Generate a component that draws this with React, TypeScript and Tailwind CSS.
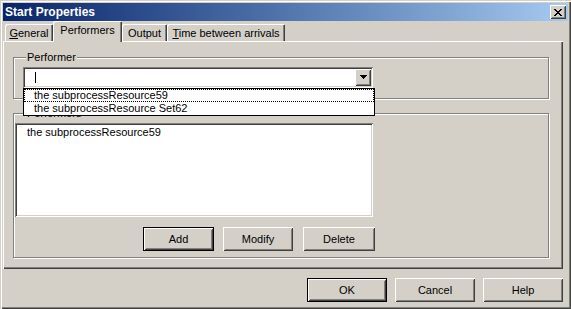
import { ReactNode } from 'react';

const raised =
  'shadow-[inset_1px_1px_0_#fff,inset_-1px_-1px_0_#404040,inset_2px_2px_0_#d4d0c8,inset_-2px_-2px_0_#808080]';
const sunken =
  'shadow-[inset_1px_1px_0_#808080,inset_-1px_-1px_0_#fff,inset_2px_2px_0_#404040,inset_-2px_-2px_0_#d4d0c8]';
const etched = 'border border-[#808080] shadow-[inset_1px_1px_0_#fff,1px_1px_0_#fff]';

function Button({ label, width, isDefault }: { label: string; width: string; isDefault?: boolean }) {
  return (
    <div
      className={`${width} h-[24px] flex items-center justify-center bg-[#d4d0c8] ${raised} ${
        isDefault ? 'border border-black' : ''
      }`}
    >
      {label}
    </div>
  );
}

function Tab({ children, width, active }: { children: ReactNode; width: string; active?: boolean }) {
  return (
    <div
      className={`${width} flex items-center justify-center rounded-tl-[2px] rounded-tr-[1px] bg-[#d4d0c8] shadow-[inset_1px_1px_0_#fff,inset_-1px_0_0_#404040,inset_-2px_0_0_#808080] ${
        active ? 'relative z-10 h-[21px] -mb-px pb-[3px]' : 'h-[17px] pt-px'
      }`}
    >
      {children}
    </div>
  );
}

function GroupLabel({ text }: { text: string }) {
  return (
    <span className="absolute left-[12px] -top-[7px] px-px leading-[13px] bg-[#d4d0c8]">{text}</span>
  );
}

export default function App() {
  return (
    <div className="w-[571px] h-[309px] flex flex-col pl-[3px] pr-[3px] pt-[3px] bg-[#d4d0c8] text-[11px] text-black font-['Liberation_Sans',Arial,sans-serif] shadow-[inset_1px_1px_0_#d4d0c8,inset_2px_2px_0_#fff,inset_-1px_-1px_0_#404040,inset_-2px_-2px_0_#808080] overflow-hidden">
      {/* title bar */}
      <div className="h-[18px] flex items-center justify-between bg-gradient-to-r from-[#0a246a] to-[#a6caf0]">
        <span className="pl-[2px] text-[12px] font-bold text-white leading-none">Start Properties</span>
        <div className={`mr-[2px] w-[16px] h-[14px] flex items-center justify-center bg-[#d4d0c8] ${raised}`}>
          <svg width="8" height="7" viewBox="0 0 8 7" shapeRendering="crispEdges">
            <path d="M0 0h2v1h-2zM6 0h2v1h-2zM1 1h2v1h-2zM5 1h2v1h-2zM2 2h4v1h-4zM3 3h2v1h-2zM2 4h4v1h-4zM1 5h2v1h-2zM5 5h2v1h-2zM0 6h2v1h-2zM6 6h2v1h-2z" fill="#000" />
          </svg>
        </div>
      </div>

      {/* tabs */}
      <div className="h-[20px] flex items-end pl-[2px]">
        <Tab width="w-[48px]">
          <span>
            <span className="underline underline-offset-[1px]">G</span>eneral
          </span>
        </Tab>
        <Tab width="w-[69px]" active>
          Performers
        </Tab>
        <Tab width="w-[45px]">Output</Tab>
        <Tab width="w-[118px]">
          <span>
            <span className="underline underline-offset-[1px]">T</span>ime between arrivals
          </span>
        </Tab>
      </div>

      {/* tab panel */}
      <div className="mr-[5px] h-[228px] flex flex-col pl-[10px] pt-[16px] shadow-[inset_1px_1px_0_#fff,inset_-1px_-1px_0_#404040,inset_-2px_-2px_0_#808080]">
        <div className={`relative w-[536px] h-[42px] pl-[9px] pt-[9px] ${etched}`}>
          <GroupLabel text="Performer" />
          <div className={`w-[350px] h-[21px] flex items-center justify-between bg-white ${sunken}`}>
            <span className="ml-[12px] w-px h-[11px] bg-black" />
            <div className={`mr-[2px] mb-[1px] w-[16px] h-[17px] flex items-center justify-center bg-[#d4d0c8] ${raised}`}>
              <svg width="7" height="4" viewBox="0 0 7 4" shapeRendering="crispEdges">
                <path d="M0 0h7v1h-7zM1 1h5v1h-5zM2 2h3v1h-3zM3 3h1v1h-1z" fill="#000" />
              </svg>
            </div>
          </div>

          {/* open drop-down list */}
          <div className="absolute left-[9px] top-[30px] z-20 w-[352px] border border-black bg-white leading-[13px]">
            <div className="h-[13px] pl-[10px] outline-1 outline-dotted outline-black -outline-offset-1">
              the subprocessResource59
            </div>
            <div className="h-[13px] pl-[10px]">the subprocessResource Set62</div>
          </div>
        </div>

        <div className={`relative mt-[14px] w-[536px] h-[145px] pl-px pt-[9px] flex flex-col ${etched}`}>
          <GroupLabel text="Performers" />
          <div className={`w-[358px] h-[94px] bg-white pl-[12px] pt-[3px] leading-[13px] ${sunken}`}>
            the subprocessResource59
          </div>
          <div className="mt-[10px] ml-[128px] flex">
            <Button label="Add" width="w-[71px]" isDefault />
            <Button label="Modify" width="ml-[9px] w-[70px]" />
            <Button label="Delete" width="ml-[10px] w-[72px]" />
          </div>
        </div>
      </div>

      {/* dialog buttons */}
      <div className="mt-[9px] mr-[5px] flex justify-end gap-[8px]">
        <Button label="OK" width="w-[80px]" isDefault />
        <Button label="Cancel" width="w-[80px]" />
        <Button label="Help" width="w-[80px]" />
      </div>
    </div>
  );
}
